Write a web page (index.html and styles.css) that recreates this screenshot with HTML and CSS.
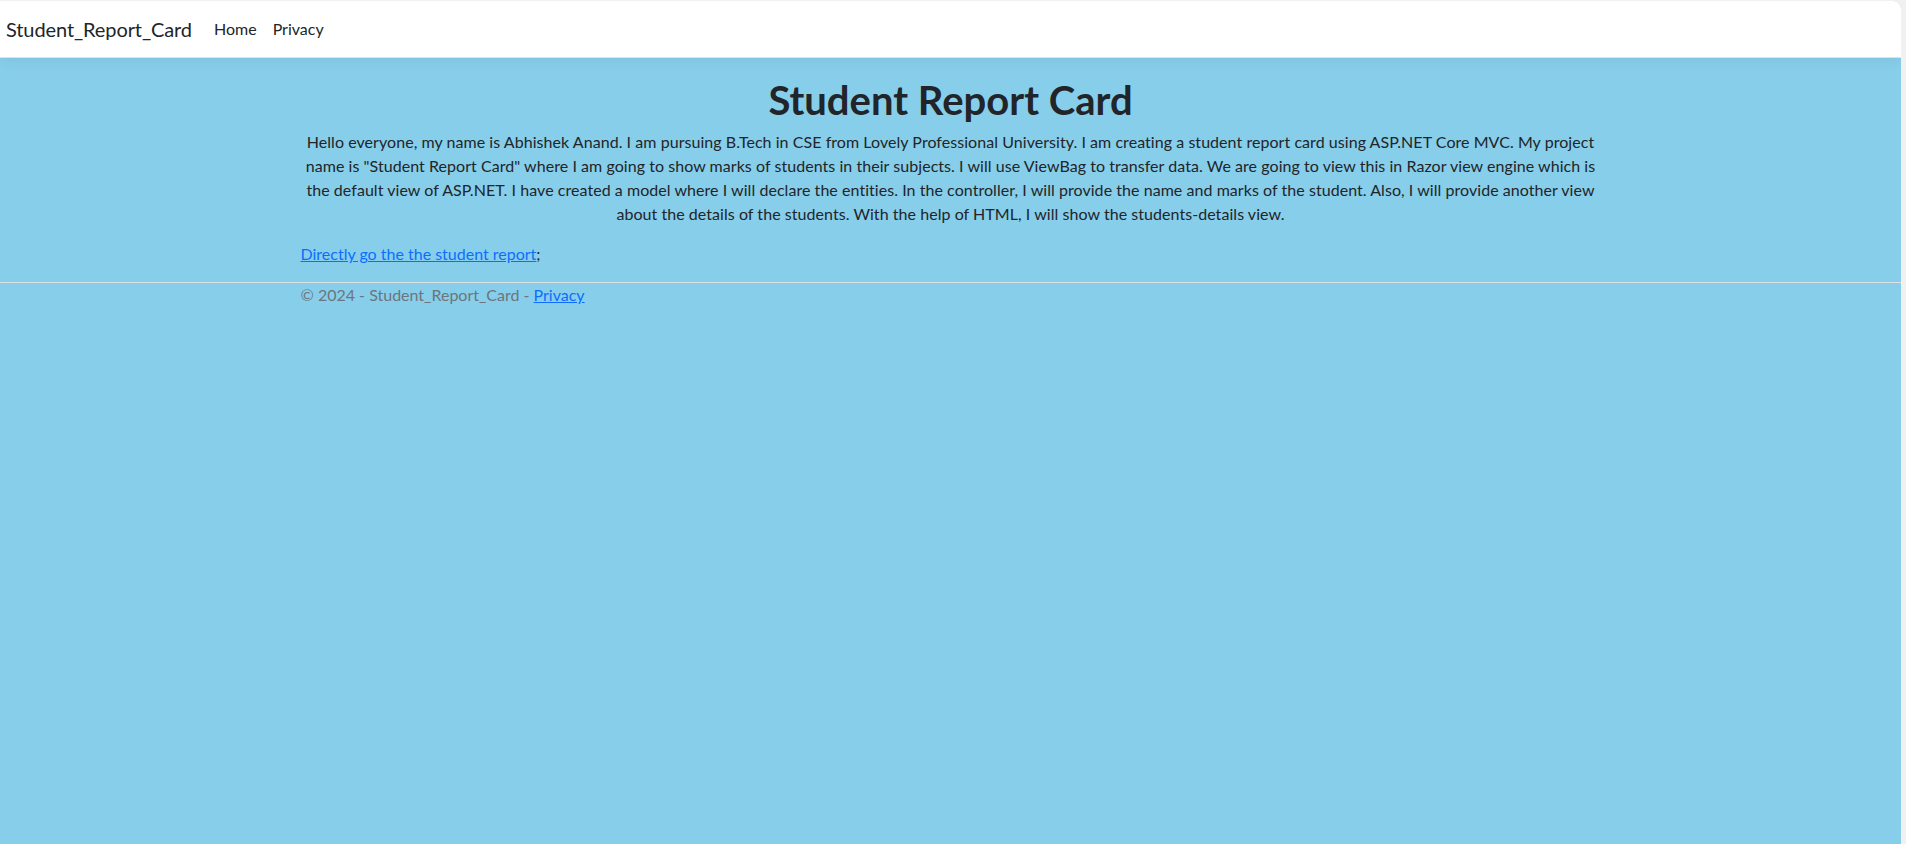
FILE: index.html
```html
<!DOCTYPE html>
<html lang="en">
<head>
<meta charset="utf-8">
<title>Home Page - Student_Report_Card</title>
<link rel="stylesheet" href="styles.css">
</head>
<body>
<div class="page">
  <header>
    <nav class="navbar">
      <a class="brand" href="#">Student_Report_Card</a>
      <ul class="nav">
        <li><a class="nav-link" href="#">Home</a></li>
        <li><a class="nav-link" href="#">Privacy</a></li>
      </ul>
    </nav>
  </header>
  <main class="container">
    <div class="intro">
      <h1 class="title">Student Report Card</h1>
      <p class="lead-text">Hello everyone, my name is Abhishek Anand. I am pursuing B.Tech in CSE from Lovely Professional University. I am creating a student report card using ASP.NET Core MVC. My project name is "Student Report Card" where I am going to show marks of students in their subjects. I will use ViewBag to transfer data. We are going to view this in Razor view engine which is the default view of ASP.NET. I have created a model where I will declare the entities. In the controller, I will provide the name and marks of the student. Also, I will provide another view about the details of the students. With the help of HTML, I will show the students-details view.</p>
    </div>
    <p class="go"><a href="#">Directly go the the student report</a>;</p>
  </main>
  <footer class="footer">
    <div class="container">&copy; 2024 - Student_Report_Card - <a href="#">Privacy</a></div>
  </footer>
</div>
</body>
</html>
```
FILE: styles.css
```css
html, body {
  margin: 0;
  padding: 0;
}
body {
  background: #f1f1f1;
  font-family: "Segoe UI", Lato, "Noto Sans", sans-serif;
  font-size: 16px;
  line-height: 24px;
  color: #212529;
}
.page {
  margin-top: 1px;
  margin-right: 5px;
  min-height: 843px;
  background: #87ceea;
  border-top-right-radius: 8px;
  overflow: hidden;
}
.navbar {
  display: flex;
  align-items: center;
  background: #fff;
  border-bottom: 1px solid #dee2e6;
  box-shadow: 0 4px 12px rgba(0, 0, 0, 0.05);
  padding: 8px 6px;
  height: 40px;
}
.brand {
  font-size: 20px;
  line-height: 30px;
  color: #212529;
  text-decoration: none;
  margin-right: 14px;
  letter-spacing: -0.1px;
}
.nav {
  display: flex;
  list-style: none;
  margin: 0;
  padding: 0;
}
.nav-link {
  display: block;
  padding: 8px;
  color: #212529;
  text-decoration: none;
}
.container {
  width: 1300px;
  margin: 0 auto;
  padding: 0 12px;
}
main.container {
  padding-top: 16px;
}
.intro {
  text-align: center;
}
.title {
  font-size: 40px;
  line-height: 48px;
  font-weight: 700;
  margin: 0 0 6px;
  padding-top: 2px;
}
.lead-text {
  margin: 0 0 16px;
  letter-spacing: 0.05px;
}
.go {
  margin: 0 0 16px;
}
a {
  color: #0d6efd;
}
.footer {
  border-top: 1px solid #dee2e6;
  color: #6c757d;
}
```
